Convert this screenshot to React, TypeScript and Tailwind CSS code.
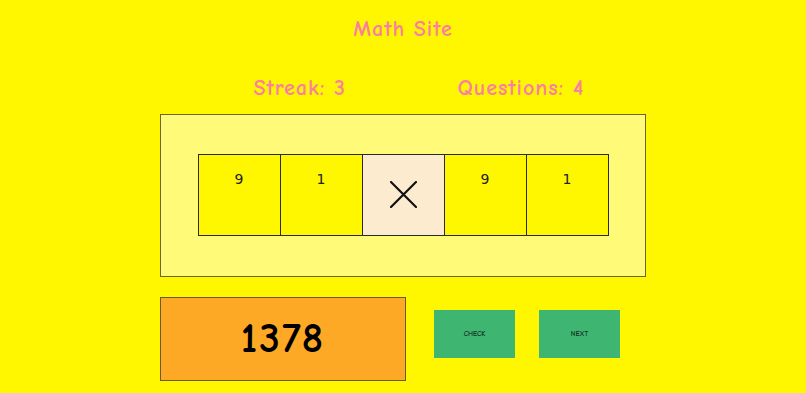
const comic = "font-['Comic_Sans_MS','Comic_Neue',Lato,'DejaVu_Sans',sans-serif]";

const tiles = ['9', '1', 'x', '9', '1'];

function Tile({ value }: { value: string }) {
  if (value === 'x') {
    return (
      <div className="flex h-[82px] w-[83px] items-center justify-center border border-[#2a2a2a] bg-[#fdebd0]">
        <svg width="27" height="27" viewBox="0 0 27 27">
          <path d="M1 1 L26 26 M26 1 L1 26" stroke="#111" strokeWidth="2.2" strokeLinecap="round" />
        </svg>
      </div>
    );
  }
  return (
    <div className="flex h-[82px] w-[83px] justify-center border border-[#2a2a2a] bg-[#fff700] pt-[16px] font-['DejaVu_Sans',sans-serif] text-[14px] leading-[16px] text-[#222]">
      {value}
    </div>
  );
}

export default function App() {
  return (
    <div className={`flex h-[393px] w-full flex-col items-center bg-[#fff700] ${comic}`}>
      <h1 className="mt-[15px] text-[22px] font-bold leading-[28px] tracking-[1px] text-[#fb7ea3]">Math Site</h1>

      <div className="mt-[31px] flex w-[485px] text-[22px] font-bold leading-[28px] tracking-[1px] text-[#fb7ea3]">
        <div className="w-[297px] pl-[93px]">Streak: 3</div>
        <div>Questions: 4</div>
      </div>

      <div className="mt-[12px] flex h-[163px] w-[486px] items-center justify-center border border-[#6b6620] bg-[#fffa78]">
        <div className="-mt-[2px] flex">
          {tiles.map((t, i) => (
            <div key={i} className={i > 0 ? '-ml-px' : ''}>
              <Tile value={t} />
            </div>
          ))}
        </div>
      </div>

      <div className="mt-[20px] flex w-[486px] items-start">
        <div className="flex h-[84px] w-[246px] items-center justify-center border border-[#6b5a20] bg-[#fea926] text-[42px] font-bold leading-none tracking-[2px] text-black">
          1378
        </div>
        <button className="ml-[28px] mt-[13px] flex h-[48px] w-[81px] items-center justify-center bg-[#3eb672] text-[7px] font-bold text-[#143020]">
          CHECK
        </button>
        <button className="ml-[24px] mt-[13px] flex h-[48px] w-[81px] items-center justify-center bg-[#3eb672] text-[7px] font-bold text-[#143020]">
          NEXT
        </button>
      </div>
    </div>
  );
}
